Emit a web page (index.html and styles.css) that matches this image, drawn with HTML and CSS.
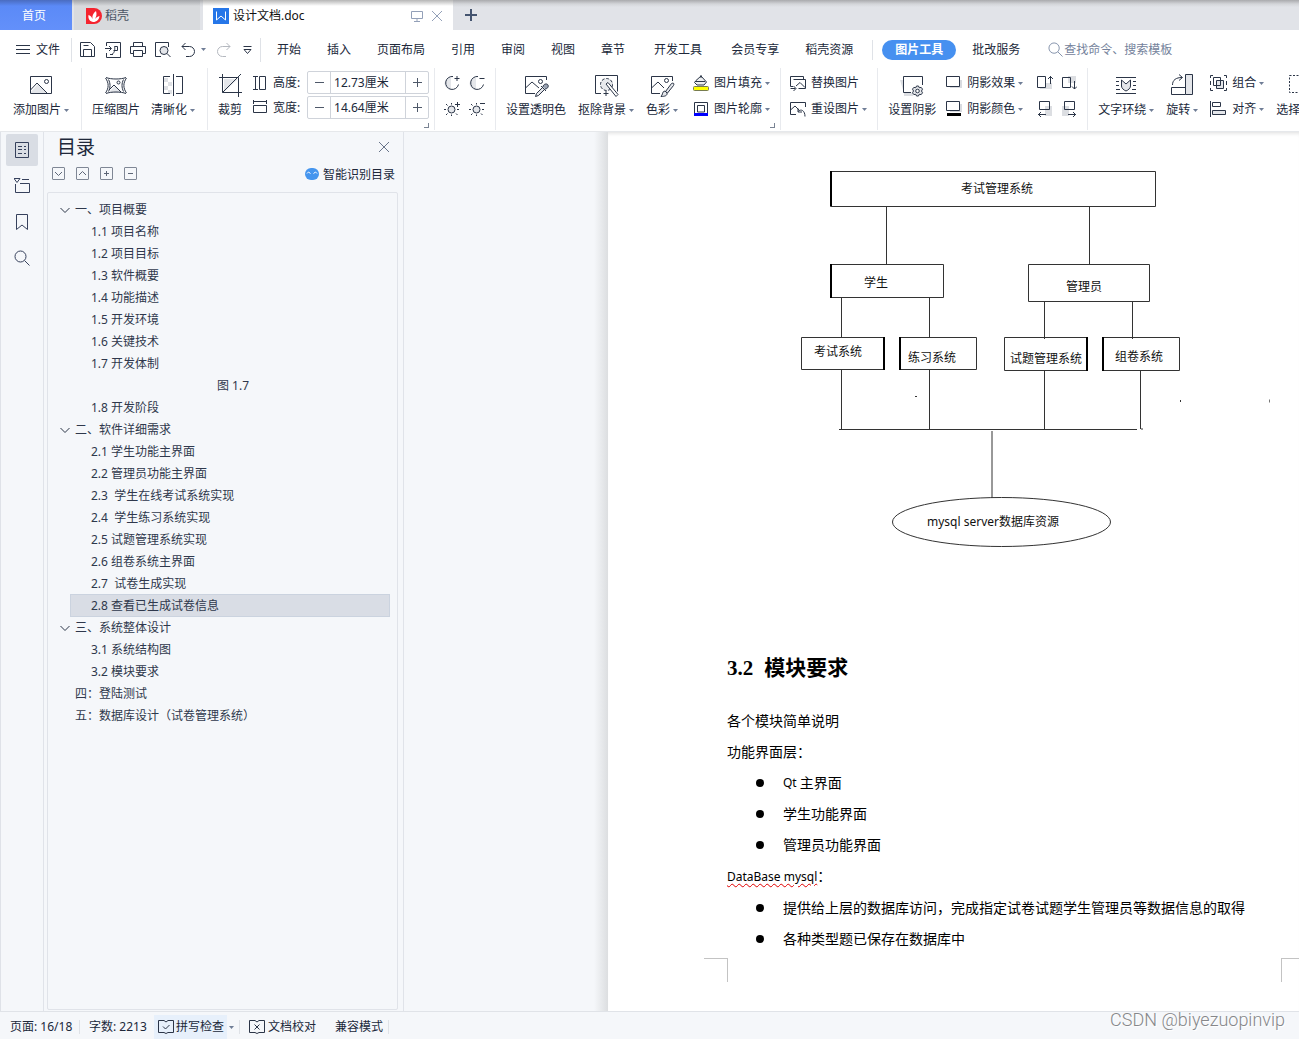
FILE: index.html
```html
<!DOCTYPE html>
<html lang="zh-CN">
<head>
<meta charset="utf-8">
<title>设计文档.doc</title>
<link rel="stylesheet" href="styles.css">
</head>
<body>
<svg class="sprite" aria-hidden="true">
  <symbol id="caret" viewBox="0 0 5 3"><path d="M0 0h5L2.500 3z" fill="#6f7d96"/></symbol>
  <symbol id="pic" viewBox="0 0 28 28"><path d="M4 20l7-8 9 9H4z" fill="#e4e6ea" stroke="none"/><path d="M3.500 4.500h21v17h-21zM3.500 18l6.500-7 10 10"/><circle cx="19.500" cy="9.500" r="2"/></symbol>
  <symbol id="compress" viewBox="0 0 28 28"><path d="M7 20l6-6 7 7H7z" fill="#e4e6ea" stroke="none"/><path d="M4 5.500c5 2 15 2 20 0M4 21.500c5-2 15-2 20 0M3.500 6c3.500 5 3.500 10 0 15M24.500 6c-3.500 5-3.500 10 0 15M6.500 7.500c2 4 2 8 0 12M21.500 7.500c-2 4-2 8 0 12M7 18l5-5 7 7"/><circle cx="16.500" cy="10.500" r="1.500"/></symbol>
  <symbol id="sharpen" viewBox="0 0 28 28"><path d="M5 6h4v4H5zM9 10h4v4H9zM5 14h4v4H5zM9 18h4v4H9z" fill="#dfe1e5" stroke="none"/><path d="M11 4.500H4.500v17H11M17 4.500h6.500v17H17M14.500 2v22"/></symbol>
  <symbol id="crop" viewBox="0 0 28 28"><path d="M8 20V7h14z" fill="#e4e6ea" stroke="none"/><path d="M3 5.500h19.500V25M6.500 2v18.500H26M6.500 20.500L25 2"/></symbol>
  <symbol id="setalpha" viewBox="0 0 28 28"><path d="M24.500 8V4.500h-21v17H13M3.500 16l6.500-6 7 6"/><circle cx="18.500" cy="9.500" r="2"/><path d="M13.500 24.500l1-3 6-6 2 2-6 6zM19 14l5 5" fill="#e4e6ea"/><path d="M21 15c0-3 4-4 5-2s-1 4-3 4" fill="#9aa3b3"/></symbol>
  <symbol id="cutout" viewBox="0 0 28 28"><path d="M9 21.500H3.500v-18h22v16"/><circle cx="14.500" cy="12.500" r="6" stroke-dasharray="3 1.500" fill="#e8eaed"/><path d="M14 12l2-1.500 10 12-2 2zM14 19v5M11.500 21.500h5" fill="#fff"/></symbol>
  <symbol id="colour" viewBox="0 0 28 28"><path d="M24.500 9V4.500h-21v17H12M3.500 16l6.500-6 6 6"/><circle cx="18.500" cy="8.500" r="2"/><path d="M17.500 19.500l6-8c2-1 3 0 2 2l-6 7.500zM17 19c-3 0-2 4-4 5.500 4 0 6.500-1 6-3.500z" fill="#e4e6ea"/></symbol>
  <symbol id="shadowset" viewBox="0 0 28 28"><path d="M2 8h4v16h9v-3H6z" fill="#dcdee2" stroke="none"/><path d="M13 20.500H5.500v-16h19V13"/><path d="M18.500 14h2l.7 1.700 2-.3 1.300 1.700-1 1.900 1 1.800-1.300 1.800-2-.3-.7 1.700h-2l-.7-1.700-2 .3-1.300-1.800 1-1.800-1-1.900 1.300-1.700 2 .3z" fill="#e4e6ea"/><circle cx="19.500" cy="19" r="1.800" fill="#fff"/></symbol>
  <symbol id="wrap" viewBox="0 0 28 28"><path d="M4 5.500h20M4 21.500h20M4 9.500h3M4 13.500h3M4 17.500h4M24 9.500h-3M24 13.500h-3M24 17.500h-4"/><path d="M9.500 8l4.500 4 4.500-4v6c0 2-2 4-4.500 5-2.500-1-4.500-3-4.500-5z" fill="#e4e6ea"/></symbol>
  <symbol id="rotate" viewBox="0 0 28 28"><path d="M17.500 2.500h7v20h-7z" fill="#e4e6ea"/><path d="M17.500 15.500h-14v7h14M4.500 13C4.500 8 8 5.500 14 5.500M11 2.500l3.500 3-3.500 3"/></symbol>
  <symbol id="selectpane" viewBox="0 0 28 28"><path d="M3.500 3.500h20v17h-20z" stroke-dasharray="2 1.500"/><path d="M14.500 12.500h9v12h-9z" fill="#e4e6ea"/></symbol>
  <symbol id="height" viewBox="0 0 14 16"><path d="M0 1.500h5M0 14.500h5M2.500 1.500v13M6.500 1.500h6v13h-6z"/></symbol>
  <symbol id="width" viewBox="0 0 14 16"><path d="M.5 0v4M13.500 0v4M.5 1.500h13M.5 5.500h13v7H.5z"/></symbol>
  <symbol id="contrast-up" viewBox="0 0 16 16"><path d="M7 2a6.500 6.500 0 000 13z" fill="#e4e6ea" stroke="none"/><path d="M9 1.500a6.500 6.500 0 105.500 8M10.500 3.500h5M13 1v5"/></symbol>
  <symbol id="contrast-down" viewBox="0 0 16 16"><path d="M7 2a6.500 6.500 0 000 13z" fill="#e4e6ea" stroke="none"/><path d="M9 1.500a6.500 6.500 0 105.500 8M10.500 3.500h5"/></symbol>
  <symbol id="bright-up" viewBox="0 0 16 16"><circle cx="7.500" cy="8.500" r="3.500" fill="#e4e6ea"/><path d="M7.500 2v1.500M7.500 13.500V15M0 8.500h2M13 8.500h2M2 3l1.500 1.500M2 14l1.500-1.500M12 12.500l1.500 1.500M11 3.500h5M13.500 1v5"/></symbol>
  <symbol id="bright-down" viewBox="0 0 16 16"><circle cx="7.500" cy="8.500" r="3.500" fill="#e4e6ea"/><path d="M7.500 2v1.500M7.500 13.500V15M0 8.500h2M13 8.500h2M2 3l1.500 1.500M2 14l1.500-1.500M12 12.500l1.500 1.500M11 2.500h5"/></symbol>
  <symbol id="fill" viewBox="0 0 16 16"><path d="M3 5.500L8 1l5.500 6-2.500 3H4L1.500 7.500zM2 6.500h10M8 3V0" fill="#eceef0"/><rect x=".5" y="11.500" width="15" height="4" rx="1" fill="#ff0" stroke="#777c50"/></symbol>
  <symbol id="outline" viewBox="0 0 16 16"><path d="M1.500 12V1.500h13V12M4.500 11V4.500h7V11z"/><path d="M1 12h14v3H1z" fill="#00f" stroke="none"/></symbol>
  <symbol id="replace" viewBox="0 0 16 16"><path d="M13.500 4V1.500H.5v10H3M3.500 4.500h12v9h-7M6 11l4-3.500 5 5M.5 13.500h5M3.500 11l2.500 2.500L3.500 16"/></symbol>
  <symbol id="reset" viewBox="0 0 16 16"><path d="M15.500 6V1.500H.5v12H6M.5 9L5 5l4 4M8 10.500c3-3 7-1 7 5M8 7.500v3.500h4"/></symbol>
  <symbol id="shadow" viewBox="0 0 16 16"><path d="M4 13h12V5h-2v6H4z" fill="#d9dbe0" stroke="none"/><path d="M.5 1.500h13v10H.5z"/></symbol>
  <symbol id="shadowcolor" viewBox="0 0 16 16"><path d="M4 11h12V3h-2v6H4z" fill="#d9dbe0" stroke="none"/><path d="M.5.500h13v9H.5z"/><path d="M1 12h14v3H1z" fill="#000" stroke="none"/></symbol>
  <symbol id="sh-up" viewBox="0 0 16 16"><path d="M3 14h12V8H9v4H3z" fill="#dcdee2" stroke="none"/><path d="M.5 1.500h8v11h-8zM13.500 9V1M11 4l2.500-2.500L16 4"/></symbol>
  <symbol id="sh-down" viewBox="0 0 16 16"><path d="M7 1h8v7H7z" fill="#dcdee2" stroke="none"/><path d="M1.500 2.500h8v10h-8zM13.500 6v8M11 11.500l2.500 2.500 2.500-2.500"/></symbol>
  <symbol id="sh-left" viewBox="0 0 16 16"><path d="M8 5h7v10H8z" fill="#dcdee2" stroke="none"/><path d="M2.500.500h10v8h-10zM1 13.500h8M4 11l-2.500 2.500L4 16"/></symbol>
  <symbol id="sh-right" viewBox="0 0 16 16"><path d="M1 5h7v10H1z" fill="#dcdee2" stroke="none"/><path d="M3.500.500h10v8h-10zM7 13.500h8M12 11l2.500 2.500L12 16"/></symbol>
  <symbol id="group" viewBox="0 0 17 16"><path d="M.5 3V.500H3M14 .500h2.500V3M.5 13v2.500H3M14 15.500h2.500V13M.5 6v4M16.500 6v4"/><path d="M6.500 5.500h7v8h-7z" fill="#e4e6ea"/><path d="M3.500 2.500h7v8h-7z"/></symbol>
  <symbol id="align" viewBox="0 0 17 16"><path d="M.5 0v16M2.500 1.500h8v4h-8z"/><path d="M2.500 9.500h13v4h-13z" fill="#e4e6ea"/></symbol>
  <symbol id="save" viewBox="0 0 16 16"><path d="M.5.500h10l4 4v10H.5zM3.500 14V7.500h8V14M3.500 3.500h5"/></symbol>
  <symbol id="pdf" viewBox="0 0 16 16"><path d="M1.500 4V.500h14v15h-14V11M0 6.500h6M4 4l2.500 2.500L4 9M7 12.500c3-2 3-6 2.500-8h3v4h-4M5 12.500h3"/></symbol>
  <symbol id="print" viewBox="0 0 16 16"><path d="M3.500 4V.500h9V4M3 11.500H.5v-7h15v7H13M3.500 8.500h9v6h-9z"/></symbol>
  <symbol id="preview" viewBox="0 0 16 16"><path d="M13.500 5V.500H.5v14H6"/><circle cx="9" cy="8.500" r="4" fill="#e4e6ea"/><path d="M12 11.500l3.500 3.500"/></symbol>
  <symbol id="undo" viewBox="0 0 14 16"><path d="M4.500 1L1 4.500 4.500 8M1 4.500h7.500a5 5 0 010 10H5"/></symbol>
  <symbol id="redo" viewBox="0 0 14 16"><path d="M9.500 1L13 4.500 9.500 8M13 4.500H5.500a5 5 0 000 10H9"/></symbol>
  <symbol id="more" viewBox="0 0 9 16"><path d="M.5 4.500h8M1 7.500L4.500 11.500 8 7.500z"/></symbol>
  <symbol id="lens" viewBox="0 0 16 16"><circle cx="6.500" cy="6.500" r="5.500"/><path d="M10.500 10.500l5 5"/></symbol>
  <symbol id="chev" viewBox="0 0 10 10"><path d="M.5 3L5 7.500 9.500 3"/></symbol>
  <symbol id="cross" viewBox="0 0 10 10"><path d="M0 0l10 10M10 0L0 10"/></symbol>
</svg>

<header>
  <nav class="tabs" aria-label="文档标签">
    <button class="tab tab-home">首页</button>
    <button class="tab tab-docer">
      <svg width="16" height="16" viewBox="0 0 16 16"><path d="M0 0h8a8 8 0 010 16H0z" fill="#f5242f"/><path d="M7 14C3 13 2 10 2.500 7c2.500 1 3.500 2.500 4 4C6 8 7 5 10 3c1 3 .5 5.500-1 8 1-1.500 2.500-2.500 4.500-3-.5 3.500-2.500 6-6.500 6z" fill="#fff"/></svg>
      稻壳
    </button>
    <div class="tab tab-doc">
      <svg width="16" height="16" viewBox="0 0 16 16"><path d="M0 0h16v16H0z" fill="#2676e8"/><path d="M3.500 3.500v8.500l4.500-4 4.500 4V3.500" fill="none" stroke="#fff"/></svg>
      <span class="doc-name">设计文档.doc</span>
      <button class="plain" aria-label="窗口"><svg class="ln faint" width="12" height="12" viewBox="0 0 12 12"><path d="M.5 1.500h11v7H.5zM6 8.500v3M3 11.500h6"/></svg></button>
      <button class="plain" aria-label="关闭标签"><svg class="ln faint" width="10" height="10"><use href="#cross"/></svg></button>
    </div>
    <button class="plain add" aria-label="新建"><svg width="12" height="12" viewBox="0 0 12 12"><path d="M0 6h12M6 0v12" stroke="#44546f" stroke-width="2"/></svg></button>
  </nav>

  <div class="menu">
    <button class="file"><svg class="ln" width="14" height="12" viewBox="0 0 14 12"><path d="M0 1.500h14M0 5.500h14M0 9.500h14"/></svg>文件</button>
    <div class="quick">
      <button class="plain" aria-label="保存"><svg class="ln" width="16" height="16"><use href="#save"/></svg></button>
      <button class="plain" aria-label="输出为PDF"><svg class="ln" width="16" height="16"><use href="#pdf"/></svg></button>
      <button class="plain" aria-label="打印"><svg class="ln" width="16" height="16"><use href="#print"/></svg></button>
      <button class="plain" aria-label="打印预览"><svg class="ln" width="16" height="16"><use href="#preview"/></svg></button>
      <button class="plain undo" aria-label="撤销"><svg class="ln" width="14" height="16"><use href="#undo"/></svg><svg width="5" height="3"><use href="#caret"/></svg></button>
      <button class="plain" aria-label="恢复" disabled><svg class="ln off" width="14" height="16"><use href="#redo"/></svg></button>
      <button class="plain more" aria-label="更多"><svg class="ln" width="9" height="16"><use href="#more"/></svg></button>
    </div>
    <nav class="menus" aria-label="功能区">
      <button>开始</button><button>插入</button><button>页面布局</button><button>引用</button><button>审阅</button><button>视图</button><button>章节</button><button class="wide">开发工具</button><button>会员专享</button><button>稻壳资源</button>
    </nav>
    <div class="context">
      <button class="pill">图片工具</button>
      <button>批改服务</button>
    </div>
    <label class="search"><svg class="ln" width="15" height="15"><use href="#lens"/></svg><input type="search" aria-label="查找命令" placeholder="查找命令、搜索模板"></label>
  </div>

  <div class="ribbon">
    <section class="grp g-add">
      <button class="big"><svg class="ln"><use href="#pic"/></svg><span>添加图片<svg class="ct"><use href="#caret"/></svg></span></button>
    </section>
    <section class="grp g-compress">
      <button class="big"><svg class="ln"><use href="#compress"/></svg><span>压缩图片</span></button>
      <button class="big"><svg class="ln"><use href="#sharpen"/></svg><span>清晰化<svg class="ct"><use href="#caret"/></svg></span></button>
    </section>
    <section class="grp g-size">
      <button class="big"><svg class="ln"><use href="#crop"/></svg><span>裁剪</span></button>
      <div class="rows sizes">
        <div class="row"><svg class="ln" width="14" height="16"><use href="#height"/></svg><label for="h">高度:</label>
          <div class="spin"><button aria-label="减小高度"><svg class="sg" viewBox="0 0 9 9"><path d="M0 4.500h9"/></svg></button><input id="h" value="12.73厘米"><button aria-label="增大高度"><svg class="sg" viewBox="0 0 9 9"><path d="M0 4.500h9M4.500 0v9"/></svg></button></div></div>
        <div class="row"><svg class="ln" width="14" height="16"><use href="#width"/></svg><label for="w">宽度:</label>
          <div class="spin"><button aria-label="减小宽度"><svg class="sg" viewBox="0 0 9 9"><path d="M0 4.500h9"/></svg></button><input id="w" value="14.64厘米"><button aria-label="增大宽度"><svg class="sg" viewBox="0 0 9 9"><path d="M0 4.500h9M4.500 0v9"/></svg></button></div></div>
      </div>
      <i class="launch"></i>
    </section>
    <section class="grp g-light">
      <div class="rows">
        <div class="row"><button class="plain" aria-label="增加对比度"><svg class="ln"><use href="#contrast-up"/></svg></button><button class="plain" aria-label="降低对比度"><svg class="ln"><use href="#contrast-down"/></svg></button></div>
        <div class="row"><button class="plain" aria-label="增加亮度"><svg class="ln"><use href="#bright-up"/></svg></button><button class="plain" aria-label="降低亮度"><svg class="ln"><use href="#bright-down"/></svg></button></div>
      </div>
    </section>
    <section class="grp g-style">
      <button class="big"><svg class="ln"><use href="#setalpha"/></svg><span>设置透明色</span></button>
      <button class="big"><svg class="ln"><use href="#cutout"/></svg><span>抠除背景<svg class="ct"><use href="#caret"/></svg></span></button>
      <button class="big"><svg class="ln"><use href="#colour"/></svg><span>色彩<svg class="ct"><use href="#caret"/></svg></span></button>
      <div class="rows">
        <button class="row"><svg class="ln"><use href="#fill"/></svg>图片填充<svg class="ct"><use href="#caret"/></svg></button>
        <button class="row"><svg class="ln"><use href="#outline"/></svg>图片轮廓<svg class="ct"><use href="#caret"/></svg></button>
      </div>
      <i class="launch"></i>
    </section>
    <section class="grp g-replace">
      <div class="rows">
        <button class="row"><svg class="ln"><use href="#replace"/></svg>替换图片</button>
        <button class="row"><svg class="ln"><use href="#reset"/></svg>重设图片<svg class="ct"><use href="#caret"/></svg></button>
      </div>
    </section>
    <section class="grp g-shadow">
      <button class="big"><svg class="ln"><use href="#shadowset"/></svg><span>设置阴影</span></button>
      <div class="rows">
        <button class="row"><svg class="ln"><use href="#shadow"/></svg>阴影效果<svg class="ct"><use href="#caret"/></svg></button>
        <button class="row"><svg class="ln"><use href="#shadowcolor"/></svg>阴影颜色<svg class="ct"><use href="#caret"/></svg></button>
      </div>
      <div class="rows nudges">
        <div class="row"><button class="plain" aria-label="阴影上移"><svg class="ln"><use href="#sh-up"/></svg></button><button class="plain" aria-label="阴影下移"><svg class="ln"><use href="#sh-down"/></svg></button></div>
        <div class="row"><button class="plain" aria-label="阴影左移"><svg class="ln"><use href="#sh-left"/></svg></button><button class="plain" aria-label="阴影右移"><svg class="ln"><use href="#sh-right"/></svg></button></div>
      </div>
    </section>
    <section class="grp g-arrange">
      <button class="big"><svg class="ln"><use href="#wrap"/></svg><span>文字环绕<svg class="ct"><use href="#caret"/></svg></span></button>
      <button class="big"><svg class="ln"><use href="#rotate"/></svg><span>旋转<svg class="ct"><use href="#caret"/></svg></span></button>
      <div class="rows">
        <button class="row"><svg class="ln"><use href="#group"/></svg>组合<svg class="ct"><use href="#caret"/></svg></button>
        <button class="row"><svg class="ln"><use href="#align"/></svg>对齐<svg class="ct"><use href="#caret"/></svg></button>
      </div>
      <button class="big"><svg class="ln"><use href="#selectpane"/></svg><span>选择窗格</span></button>
    </section>
  </div>
</header>

<main>
  <nav class="rail" aria-label="侧栏">
    <button class="on" aria-label="目录"><svg class="ln" width="16" height="16" viewBox="0 0 16 16"><path d="M1.500.500h13v15h-13zM4 4.500h4M10 4.500h2M4 7.500h4M10 7.500h2M4 11.500h4M10 11.500h2"/></svg></button>
    <button aria-label="章节"><svg class="ln" width="16" height="16" viewBox="0 0 16 16"><path d="M0 .500h6L3 4.500zM8 1.500h7M1.500 6v8.500h14v-9H6"/></svg></button>
    <button aria-label="书签"><svg class="ln" width="16" height="18" viewBox="0 0 16 18"><path d="M2.500 1.500h11v15L8 12l-5.500 4.500z"/></svg></button>
    <button aria-label="查找"><svg class="ln" width="16" height="16"><use href="#lens"/></svg></button>
  </nav>

  <aside class="panel">
    <div class="panel-head"><h2>目录</h2><button class="plain" aria-label="关闭"><svg class="ln" width="10" height="10"><use href="#cross"/></svg></button></div>
    <div class="panel-tools">
      <button class="sq" aria-label="展开"><svg class="ln" viewBox="0 0 9 9"><path d="M1 3l3.500 3.500L8 3"/></svg></button>
      <button class="sq" aria-label="收起"><svg class="ln" viewBox="0 0 9 9"><path d="M1 6l3.500-3.500L8 6"/></svg></button>
      <button class="sq" aria-label="增加级别"><svg class="ln" viewBox="0 0 9 9"><path d="M2 4.500h5M4.500 2v5"/></svg></button>
      <button class="sq" aria-label="减少级别"><svg class="ln" viewBox="0 0 9 9"><path d="M2 4.500h5"/></svg></button>
      <button class="smart"><svg width="14" height="12" viewBox="0 0 14 12"><rect width="14" height="12" rx="6" fill="#4595ee"/><path d="M2 5.500l1.500-1.500L5.500 5.500M8.500 5.500l2-1.500L12 5.500" fill="none" stroke="#fff"/></svg><span>智能识别目录</span></button>
    </div>
    <ul class="toc">
      <li><button class="l1"><svg class="ln"><use href="#chev"/></svg>一、项目概要</button></li>
      <li><button>1.1 项目名称</button></li>
      <li><button>1.2 项目目标</button></li>
      <li><button>1.3 软件概要</button></li>
      <li><button>1.4 功能描述</button></li>
      <li><button>1.5 开发环境</button></li>
      <li><button>1.6 关键技术</button></li>
      <li><button>1.7 开发体制</button></li>
      <li><button class="figure">图 1.7</button></li>
      <li><button>1.8 开发阶段</button></li>
      <li><button class="l1"><svg class="ln"><use href="#chev"/></svg>二、软件详细需求</button></li>
      <li><button>2.1 学生功能主界面</button></li>
      <li><button>2.2 管理员功能主界面</button></li>
      <li><button>2.3&nbsp; 学生在线考试系统实现</button></li>
      <li><button>2.4&nbsp; 学生练习系统实现</button></li>
      <li><button>2.5 试题管理系统实现</button></li>
      <li><button>2.6 组卷系统主界面</button></li>
      <li><button>2.7&nbsp; 试卷生成实现</button></li>
      <li><button class="sel">2.8 查看已生成试卷信息</button></li>
      <li><button class="l1"><svg class="ln"><use href="#chev"/></svg>三、系统整体设计</button></li>
      <li><button>3.1 系统结构图</button></li>
      <li><button>3.2 模块要求</button></li>
      <li><button class="l1 leaf">四：登陆测试</button></li>
      <li><button class="l1 leaf">五：数据库设计（试卷管理系统）</button></li>
    </ul>
  </aside>

  <div class="canvas">
    <article class="page">
      <svg class="diagram" viewBox="727 132 572 420" width="572" height="420" role="img" aria-label="系统结构图">
        <g fill="none" stroke="#333">
          <path d="M830.500 171.500h325v35h-325zM830.500 264.500h113v33h-113zM801.500 337.500h82v32h-82zM900.500 337.500h76v32h-76zM1028.500 264.500h121v37h-121zM1004.500 337.500h82v33h-82zM1103.500 337.500h76v33h-76z"/>
          <path d="M886.500 206v59M1089.500 206v59M841.500 298v40M929.500 298v40M1044.500 301v38M1132.500 301v38M841.500 370v60M929.500 370v60M1044.500 370v60M1140.500 370v59M839 429.500h298M992 431v67M1141 429h2M915 396.500h2M1180.500 400v2"/>
          <ellipse cx="1001.500" cy="522" rx="109" ry="24.500"/>
        </g>
        <path d="M831 171v35M831 264v34M884 337v33M900 337v33M1087 337v34M1103 337v34" stroke="#000" stroke-width="2"/>
        <path d="M1269.500 399.500v3" stroke="#777"/>
        <g class="labels">
          <text x="961" y="193">考试管理系统</text>
          <text x="864" y="287">学生</text>
          <text x="1066" y="291">管理员</text>
          <text x="814" y="356">考试系统</text>
          <text x="908" y="362">练习系统</text>
          <text x="1010" y="363">试题管理系统</text>
          <text x="1115" y="361">组卷系统</text>
          <text x="927" y="526">mysql server数据库资源</text>
        </g>
      </svg>
      <h1><span class="num">3.2</span>模块要求</h1>
      <p>各个模块简单说明</p>
      <p>功能界面层：</p>
      <ul>
        <li><span class="latin">Qt </span>主界面</li>
        <li>学生功能界面</li>
        <li>管理员功能界面</li>
      </ul>
      <p><span class="latin misspelt">DataBase mysql</span>：</p>
      <ul>
        <li>提供给上层的数据库访问，完成指定试卷试题学生管理员等数据信息的取得</li>
        <li>各种类型题已保存在数据库中</li>
      </ul>
      <div class="crops"><i class="crop-l"></i><i class="crop-r"></i></div>
    </article>
  </div>
</main>

<footer>
  <span class="pages">页面: 16/18</span>
  <span class="words">字数: 2213</span>
  <button class="spell"><svg class="ln" width="16" height="14" viewBox="0 0 16 14"><path d="M6 .500H.5v12H6l2 1 2-1h5.500V.500H10L8 2zM5 6.500L7.500 9 11.500 5"/></svg>拼写检查</button>
  <button class="plain drop" aria-label="拼写选项"><svg class="ct"><use href="#caret"/></svg></button>
  <button class="proof"><svg class="ln" width="16" height="14" viewBox="0 0 16 14"><path d="M6 .500H.5v12H6l2 1 2-1h5.500V.500H10L8 2zM5.500 4.500l5 5M10.500 4.500l-5 5"/></svg>文档校对</button>
  <span class="compat">兼容模式</span>
</footer>
<div class="watermark">CSDN @biyezuopinvip</div>
</body>
</html>
```
FILE: styles.css
```css
* { box-sizing: border-box; }
body {
  margin: 0;
  min-height: 100vh;
  display: flex;
  flex-direction: column;
  position: relative;
  overflow-x: hidden;
  background: #f5f7fa;
  color: #20283a;
  font: 12px/18px "Noto Sans", "Noto Sans CJK SC", sans-serif;
}
button, input { font: inherit; color: inherit; border: 0; padding: 0; margin: 0; background: none; }
button { white-space: nowrap; text-align: left; }
svg { display: block; flex: none; }
ul { list-style: none; margin: 0; padding: 0; }
.sprite { position: absolute; width: 0; height: 0; }
.ln { fill: none; stroke: #2b3547; stroke-width: 1; }
.faint { stroke: #93a0b8; }
.off { stroke: #b4b8bf; }
.ct { width: 5px; height: 3px; }
.plain { display: flex; align-items: center; }

/* document tabs */
.tabs {
  display: flex;
  height: 30px;
  background: linear-gradient(#a9aaad, #d3d5d9 4px, #e1e3e8 7px);
}
.tab { display: flex; align-items: center; padding-top: 2px; }
.tab-home { width: 72px; justify-content: center; color: #fff; background: linear-gradient(#4a6cc0, #5b8af7 6px, #6390fa); padding-right: 4px; }
.tab-docer { width: 126px; margin-left: 2px; padding-left: 12px; gap: 3px; background: linear-gradient(#a2a4a8, #d8dadd 6px); color: #4b5565; }
.tab-doc { width: 250px; margin-left: 3px; padding-left: 10px; background: linear-gradient(#b5b5b5, #fff 6px); color: #111; gap: 4px; padding-right: 11px; }
.doc-name { flex: 1; }
.tab-doc .plain + .plain { margin-left: 5px; }
.add { margin-left: 12px; }

/* menu row */
.menu { display: flex; align-items: center; height: 38px; background: #fff; padding-top: 1px; }
.file { display: flex; align-items: center; gap: 6px; padding-left: 16px; width: 71px; height: 24px; }
.quick { display: flex; align-items: center; gap: 9px; height: 24px; width: 190px; border: solid #dfe2e7; border-width: 0 1px; padding-left: 8px; }
.undo { gap: 6px; margin-left: 1px; }
.more { margin-left: 3px; }
.quick .plain:nth-child(6) { margin-left: 2px; }
.menus { display: flex; padding: 1px 0 0 3px; }
.menus button { padding: 0 13px; }
.menus .wide { padding: 0 16px; }
.context { display: flex; align-items: center; height: 20px; margin-left: 6px; padding-left: 9px; border-left: 1px solid #dfe2e7; gap: 16px; }
.pill { background: #4690f0; color: #fff; border-radius: 10px; height: 20px; padding: 0 13px; font-weight: 600; }
.search { display: flex; align-items: center; margin-left: 28px; gap: 1px; flex: 1; }
.search .ln { stroke: #7f8ea8; }
.search input { flex: 1; min-width: 0; outline: 0; appearance: none; }
.search input::placeholder { color: #74829b; opacity: 1; }

/* ribbon */
.ribbon { display: flex; height: 64px; background: #fff; overflow: hidden; border-bottom: 1px solid #e6e8eb; }
.grp { display: flex; flex: none; height: 62px; border-right: 1px solid #e8eaee; position: relative; }
.big { display: flex; flex-direction: column; align-items: center; padding-top: 4px; gap: 1px; height: 51px; }
.big > svg { width: 28px; height: 28px; }
.big > span { display: flex; align-items: center; gap: 3px; height: 18px; }
.rows { display: flex; flex-direction: column; padding-top: 2px; }
.row { display: flex; align-items: center; gap: 4px; height: 26px; }
button.row { gap: 5px; }
.row .ln { width: 16px; height: 16px; }
.row .ct { margin-left: -2px; }
.g-add { padding: 0 12px 0 13px; }
.g-compress { padding: 0 12px 0 10px; gap: 11px; }
.g-size { padding: 0 5px 0 10px; }
.sizes { margin-left: 11px; }
.sizes .row { gap: 6px; height: 25px; }
.sizes .row .ln { width: 14px; }
.sizes label { width: 28px; }
.g-size .big { width: 24px; }
.spin { display: flex; width: 122px; height: 23px; border: 1px solid #cfd3da; border-radius: 2px; }
.spin button { width: 22px; display: flex; align-items: center; justify-content: center; }
.sg { width: 9px; height: 9px; stroke: #4e5869; }
.spin input { flex: 1; min-width: 0; padding-left: 3px; border: solid #cfd3da; border-width: 0 1px; }
.launch { position: absolute; right: 5px; bottom: 2px; width: 5px; height: 5px; border: solid #7a8494; border-width: 0 1px 1px 0; }
.g-light { padding: 0 10px 0 9px; }
.g-light .row { gap: 9px; }
.g-style { padding: 0 10px; gap: 12px; }
.g-style .rows { margin-left: 3px; }
.g-replace { padding: 0 10px 0 9px; }
.g-shadow { padding: 0 10px; gap: 10px; }
.nudges { margin-left: 4px; }
.nudges .row { gap: 8px; }
.g-arrange { padding-left: 10px; gap: 12px; border: 0; }
.g-arrange .row .ln { width: 17px; }

/* workspace */
main { display: flex; flex: 1; border-left: 1px solid #dfe2e8; }
.rail { width: 43px; padding: 2px 0 0 5px; border-right: 1px solid #e0e3e9; display: flex; flex-direction: column; gap: 4px; }
.rail button { width: 32px; height: 32px; display: flex; align-items: center; justify-content: center; border-radius: 2px; }
.rail .on { background: #d9dde4; }
.rail .ln { stroke: #36415c; }
.panel { width: 360px; padding: 0 5px 1px 3px; border-right: 1px solid #e0e3e9; display: flex; flex-direction: column; }
.panel-head { display: flex; align-items: center; justify-content: space-between; height: 30px; padding: 0 9px 0 10px; }
h2 { margin: 0; font-size: 19px; font-weight: 400; line-height: 30px; }
.panel-head .ln { stroke: #69758a; }
.panel-tools { display: flex; align-items: center; gap: 11px; height: 23px; padding: 0 3px 0 5px; margin-bottom: 7px; }
.sq { width: 13px; height: 13px; border: 1px solid #7f8795; border-radius: 1px; display: flex; align-items: center; justify-content: center; }
.sq .ln { width: 9px; height: 9px; stroke: #5d6677; }
.smart { display: flex; align-items: center; gap: 4px; margin-left: auto; }
.smart span { padding-top: 2px; }
.toc { flex: 1; border: 1px solid #e0e3e9; border-radius: 2px; padding: 6px 7px 0 22px; color: #2f384c; }
.toc li { height: 22px; display: flex; }
.toc button { flex: 1; padding-left: 21px; line-height: 22px; height: 22px; }
.toc .l1 { display: flex; align-items: center; gap: 5px; padding-left: 0; margin-left: -10px; }
.toc .l1 svg { width: 10px; height: 10px; }
.toc .leaf { padding-left: 15px; }
.toc .figure { padding-left: 147px; }
.toc .sel { height: 23px; margin-top: -1px; border: 1px solid #cbd3df; background: #d9dde5; padding-left: 20px; line-height: 21px; }
.canvas { flex: 1; min-width: 0; padding-left: 204px; background: linear-gradient(90deg, #f5f7fa 190px, #dcdee0 204px); }
.page { background: #fff; height: 100%; overflow: hidden; padding-left: 119px; color: #000; font-size: 14px; line-height: 31px; box-shadow: inset 0 4px 4px -3px #dcdcdc; }
.diagram { overflow: hidden; }
.labels { font-size: 12px; fill: #111; }
h1 { margin: 96px 0 17px; font: bold 21px/40px "Liberation Serif", "Noto Sans CJK SC", serif; }
.num { margin-right: 11px; }
p { margin: 0; }
.page li { display: flex; align-items: center; padding-left: 29px; white-space: nowrap; }
.page li::before { content: ""; width: 8px; height: 8px; border-radius: 4px; background: #000; margin-right: 19px; }
.latin { font-family: "Noto Sans", sans-serif; font-size: 12px; white-space: pre; }
.misspelt { text-decoration: underline wavy #e00000 1px; text-underline-offset: 2px; }
.crops { display: flex; justify-content: space-between; margin: 4px 0 0 -23px; height: 24px; }
.crop-l { width: 24px; border: solid #c3c3c3; border-width: 1px 1px 0 0; }
.crop-r { width: 18px; border: solid #c3c3c3; border-width: 1px 0 0 1px; }

/* status bar */
footer { display: flex; align-items: center; height: 28px; padding: 3px 0 0 10px; border-top: 1px solid #e0e3e8; }
footer button { display: flex; align-items: center; }
.pages { width: 70px; border-right: 1px solid #dfe2e7; line-height: 14px; }
.words { width: 74px; padding-left: 9px; line-height: 14px; }
.spell { width: 73px; height: 24px; padding-left: 4px; gap: 2px; background: #e7f0fb; }
.drop { width: 13px; height: 14px; padding-left: 2px; border-right: 1px solid #dfe2e7; }
.proof { margin-left: 9px; gap: 3px; }
.compat { margin-left: 19px; width: 54px; border-right: 1px solid #dfe2e7; line-height: 14px; }
.watermark { position: absolute; right: 14px; bottom: 7px; font: 300 18px/24px Roboto, sans-serif; color: #86878a; text-shadow: 1px 1px 0 #fff; }
```
